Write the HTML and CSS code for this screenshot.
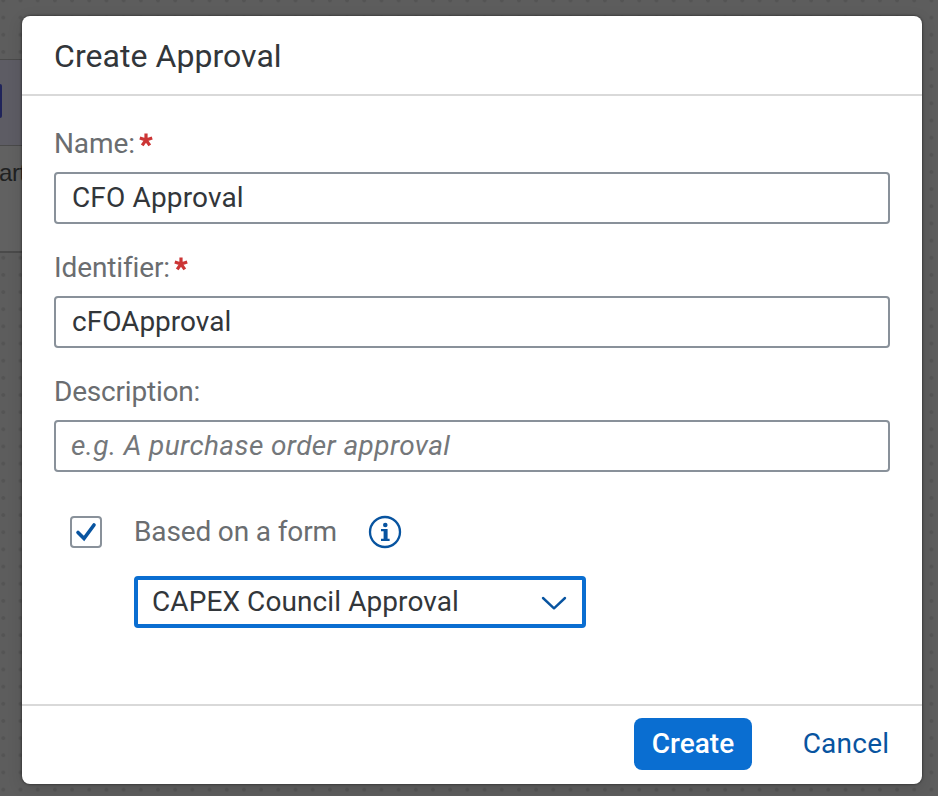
FILE: index.html
```html
<!DOCTYPE html>
<html lang="en">
<head>
<meta charset="utf-8">
<title>Create Approval</title>
<link rel="stylesheet" href="styles.css">
</head>
<body>
<div class="canvas" aria-hidden="true">
  <div class="node">
    <div class="node-head"><span class="node-icon"></span></div>
    <div class="node-body">art</div>
  </div>
</div>
<section class="dialog" role="dialog" aria-labelledby="title">
  <header class="dialog-header"><h1 id="title"><span class="t-title">Create Approval</span></h1></header>
  <form class="dialog-body">
    <div class="field">
      <div class="label"><span class="t-name">Name:</span><svg class="star" viewBox="0 0 14 14"><path d="M7 7V.5M7 7l6.2-2M7 7l3.8 5.4M7 7l-3.8 5.4M7 7L.8 5"/></svg></div>
      <div class="input"><span class="t-cfo">CFO Approval</span></div>
    </div>
    <div class="field">
      <div class="label"><span class="t-ident">Identifier:</span><svg class="star" viewBox="0 0 14 14"><path d="M7 7V.5M7 7l6.2-2M7 7l3.8 5.4M7 7l-3.8 5.4M7 7L.8 5"/></svg></div>
      <div class="input"><span class="t-cfoid">cFOApproval</span></div>
    </div>
    <div class="field">
      <div class="label"><span class="t-desc">Description:</span></div>
      <div class="input placeholder"><span class="t-place">e.g. A purchase order approval</span></div>
    </div>
    <div class="option">
      <span class="checkbox"><svg viewBox="0 0 28 28"><path d="M6 14.5l6 6L22 7"/></svg></span>
      <span class="option-label"><span class="t-based">Based on a form</span></span>
      <svg class="info" viewBox="0 0 34 34"><circle cx="17" cy="17" r="15"/><circle class="fill" cx="17.3" cy="10" r="2.3"/><path class="fill" d="M13 14h6.6v9.8h2V26H13v-2.2h2.6v-7.6H13z"/></svg>
    </div>
    <div class="select"><span class="t-capex">CAPEX Council Approval</span><svg class="chevron" viewBox="0 0 28 16"><path d="M3 3l11 10.3L25 3"/></svg></div>
  </form>
  <footer class="dialog-footer">
    <button class="btn primary"><span class="t-create">Create</span></button>
    <button class="btn"><span class="t-cancel">Cancel</span></button>
  </footer>
</section>
</body>
</html>
```
FILE: styles.css
```css
* { box-sizing: border-box; }
body {
  margin: 0;
  width: 938px;
  height: 796px;
  overflow: hidden;
  background: #5d5d5d;
  font-family: Roboto, sans-serif;
  font-size: 28px;
  color: #32363a;
  padding: 16px 16px 12px 22px;
}
.canvas {
  position: absolute;
  inset: 0;
  overflow: hidden;
  background-image: radial-gradient(circle, #545454 1.6px, transparent 2.2px);
  background-size: 17.19px 17.17px;
  background-position: -5.3px -8.2px;
}
.node {
  width: 40px;
  height: 194px;
  margin-top: 59px;
  background: #616161;
  border: 1px solid #4a4a4a;
  border-width: 1px 0 2px;
}
.node-head {
  height: 86px;
  padding-top: 24px;
  background: #5d5c64;
  border-bottom: 1px solid #4a4a4a;
}
.node-icon {
  display: block;
  width: 2px;
  height: 34px;
  background: #20245a;
  border-radius: 0 2px 2px 0;
}
.node-body {
  padding-top: 11px;
  margin-left: -1px;
  font: 24px/32px "Liberation Sans", sans-serif;
  letter-spacing: -.4px;
  color: #202122;
}
.dialog {
  position: relative;
  display: flex;
  flex-direction: column;
  width: 900px;
  height: 768px;
  background: #fff;
  border-radius: 8px;
  box-shadow: 0 0 2px 1px rgba(0, 0, 0, .3), 0 4px 16px rgba(0, 0, 0, .12);
}
.dialog-header {
  height: 80px;
  padding: 0 32px;
  border-bottom: 2px solid #d9d9d9;
}
h1 { margin: 0; font-size: 32px; font-weight: 400; line-height: 80px; letter-spacing: .05px; }
.dialog-body { flex: 1; padding: 28px 32px 0; }
.field { height: 124px; }
.label {
  display: flex;
  height: 48px;
  line-height: 40px;
  color: #6a6d70;
}
.star {
  width: 14px;
  height: 14px;
  margin: 9px 0 0 4px;
  fill: none;
  stroke: #cc3535;
  stroke-width: 3.2;
}
.t-name, .t-ident { letter-spacing: -.12px; }
.t-desc { letter-spacing: -.2px; }
.t-cfo { letter-spacing: .15px; }
.t-place { letter-spacing: .38px; }
.t-based { letter-spacing: -.14px; position: relative; top: -1px; }
.t-capex { letter-spacing: .09px; }
.t-cancel { letter-spacing: .25px; }
.input {
  height: 52px;
  padding: 0 16px;
  border: 2px solid #89919a;
  border-radius: 4px;
  line-height: 48px;
  white-space: nowrap;
}
.placeholder { color: #74777a; font-style: italic; padding-left: 15px; }
.option {
  display: flex;
  align-items: center;
  height: 60px;
  margin-top: 6px;
  padding: 0 0 0 16px;
  color: #6a6d70;
}
.checkbox {
  width: 32px;
  height: 32px;
  border: 2px solid #89919a;
  border-radius: 4px;
}
.checkbox svg { display: block; fill: none; stroke: #0854a0; stroke-width: 3.6; stroke-linecap: round; }
.option-label { width: 202px; margin: 0 32px; white-space: nowrap; }
.info { width: 34px; height: 34px; fill: none; stroke: #0854a0; stroke-width: 2.3; }
.info .fill { fill: #0854a0; stroke: none; }
.select {
  display: flex;
  align-items: center;
  justify-content: space-between;
  width: 452px;
  height: 52px;
  margin: 14px 0 0 80px;
  padding: 0 14px;
  border: 4px solid #0a6ed1;
  border-radius: 4px;
  line-height: 44px;
  white-space: nowrap;
}
.chevron { width: 28px; height: 16px; margin-top: 1px; fill: none; stroke: #0854a0; stroke-width: 2.4; stroke-linecap: round; stroke-linejoin: round; }
.dialog-footer {
  display: flex;
  justify-content: flex-end;
  gap: 34px;
  height: 80px;
  padding: 12px 16px 0;
  border-top: 2px solid #d9d9d9;
}
.btn {
  height: 52px;
  width: 120px;
  padding: 0;
  border: 0;
  border-radius: 8px;
  background: none;
  font: 28px/52px Roboto, sans-serif;
  color: #0854a0;
  white-space: nowrap;
}
.btn.primary { width: 118px; background: #0a6ed1; color: #fff; font-weight: 500; }
```
